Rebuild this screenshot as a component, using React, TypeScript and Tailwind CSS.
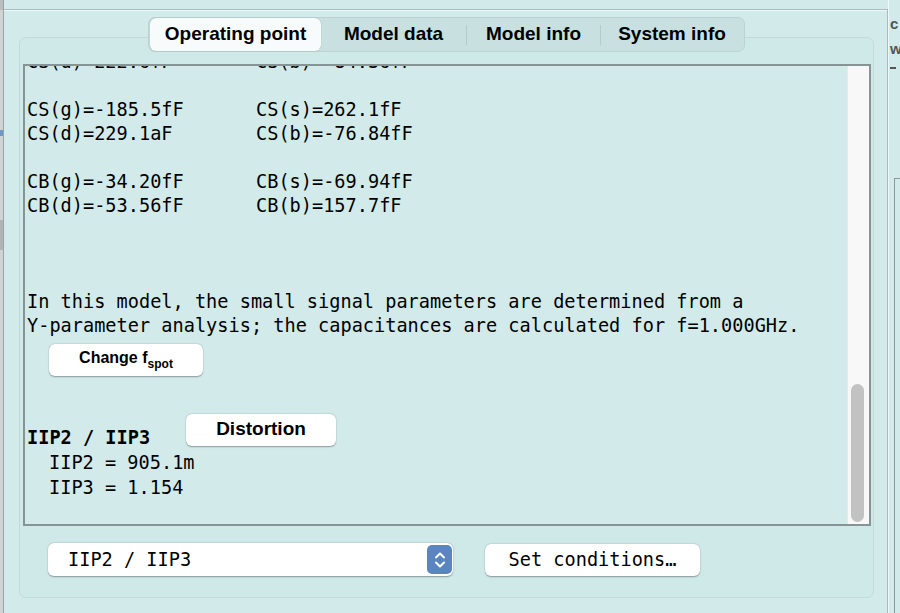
import React from "react";

const mono = { fontFamily: '"DejaVu Sans Mono", "Liberation Mono", monospace' };

function Line({ a, b }: { a: string; b?: string }) {
  return (
    <div className="flex h-[24px] items-center whitespace-pre">
      <span className="w-[229px]">{a}</span>
      {b ? <span>{b}</span> : null}
    </div>
  );
}

export default function App() {
  const tabs = [
    { label: "Operating point", w: "w-[171px]", active: true },
    { label: "Model data", w: "w-[145px]" },
    { label: "Model info", w: "w-[133px]" },
    { label: "System info", w: "w-[142px]" },
  ];
  return (
    <div
      className="relative flex h-[613px] w-[900px] overflow-hidden bg-[#d2eaea] text-black"
      style={{ fontFamily: '"Liberation Sans", Arial, sans-serif' }}
    >
      {/* left strip of another window */}
      <div className="flex w-[4px] flex-col border-r border-[#9aa6a6] bg-[#cfd3d3]">
        <div className="h-[10px] bg-[#b9bdbd]" />
        <div className="mt-[120px] h-[6px] bg-[#6f96c9]" />
        <div className="mt-[84px] h-[30px] bg-[#b0b4b4]" />
      </div>

      {/* main group box */}
      <div className="mt-[9px] flex h-[620px] w-[884px] flex-col items-start border-t border-r border-[#a8bcbc] pl-[15px] shadow-[inset_0_1px_0_#eef8f8]">
        <div className="flex w-[855px] flex-col items-center">
          {/* segmented tabs */}
          <div className="relative z-10 mt-[7px] flex h-[35px] items-center rounded-[7px] border border-[#bdd3d3] bg-[#c8e0e0] px-px text-[19px] font-bold">
            {tabs.map((t, i) => (
              <React.Fragment key={t.label}>
                {i >= 2 ? <div className="h-[20px] w-px bg-[#b3cbcb]" /> : null}
                <div
                  className={
                    "flex h-[33px] items-center justify-center " +
                    t.w +
                    (t.active
                      ? " rounded-[6px] bg-[#f7fbfb] shadow-[0_0_1px_rgba(0,0,0,0.35)]"
                      : "")
                  }
                >
                  {t.label}
                </div>
              </React.Fragment>
            ))}
          </div>

          {/* tab panel */}
          <div className="-mt-[15px] flex h-[561px] w-[855px] flex-col rounded-[7px] border border-[#c2dada] bg-[#cfe8e8] px-[3px] pt-[26px]">
            {/* text area */}
            <div className="flex h-[462px] w-[848px] overflow-hidden border-2 border-[#869494] bg-[#d2eaea]">
              <div className="flex-1 overflow-hidden pl-[2px] text-[18.6px]" style={mono}>
                <div className="-mt-[16px]">
                  <Line a="CS(d)=222.6fF" b="CS(b)=-84.36fF" />
                  <div className="h-[24px]" />
                  <Line a="CS(g)=-185.5fF" b="CS(s)=262.1fF" />
                  <Line a="CS(d)=229.1aF" b="CS(b)=-76.84fF" />
                  <div className="h-[24px]" />
                  <Line a="CB(g)=-34.20fF" b="CB(s)=-69.94fF" />
                  <Line a="CB(d)=-53.56fF" b="CB(b)=157.7fF" />
                  <div className="h-[72px]" />
                  <div className="h-[24px] leading-[24px] whitespace-pre">
                    In this model, the small signal parameters are determined from a
                  </div>
                  <div className="h-[24px] leading-[24px] whitespace-pre">
                    Y-parameter analysis; the capacitances are calculated for f=1.000GHz.
                  </div>
                  <div
                    className="ml-[22px] mt-[6px] flex h-[32px] w-[154px] items-start justify-center rounded-[6px] bg-white pt-[2px] text-[16px] font-bold shadow-[0_0.5px_1.5px_rgba(0,0,0,0.35)]"
                    style={{ fontFamily: '"Liberation Sans", Arial, sans-serif' }}
                  >
                    <span>Change f</span>
                    <span className="mt-[9px] text-[12px]">spot</span>
                  </div>
                  <div className="mt-[38px] flex items-start">
                    <div className="mt-[12px] h-[24px] w-[159px] font-bold leading-[24px]">IIP2 / IIP3</div>
                    <div
                      className="flex h-[32px] w-[150px] items-start justify-center rounded-[6px] bg-white pt-[1px] text-[19px] font-bold shadow-[0_0.5px_1.5px_rgba(0,0,0,0.35)]"
                      style={{ fontFamily: '"Liberation Sans", Arial, sans-serif' }}
                    >
                      Distortion
                    </div>
                  </div>
                  <div className="pl-[22px] leading-[25px] whitespace-pre">
                    <div>IIP2 = 905.1m</div>
                    <div>IIP3 = 1.154</div>
                  </div>
                </div>
              </div>
              {/* scrollbar */}
              <div className="flex h-full w-[22px] flex-col justify-end border-l border-[#e6eaea] bg-[#f8f8f8] pb-[2px] pl-[3px]">
                <div className="h-[138px] w-[13px] rounded-full bg-[#c2c2c2]" />
              </div>
            </div>

            {/* bottom controls */}
            <div className="mt-[17px] flex items-center pl-[25px]">
              <div className="flex h-[33px] w-[405px] items-center justify-between rounded-[6px] bg-white pl-[20px] pr-[1px] text-[18.6px] shadow-[0_0.5px_1.5px_rgba(0,0,0,0.35)]" style={mono}>
                <span>IIP2 / IIP3</span>
                <div className="flex h-[29px] w-[25px] items-center justify-center rounded-[5px] bg-[#5b85c0]">
                  <svg width="12" height="20" viewBox="0 0 12 20" fill="none" stroke="white" strokeWidth="2" strokeLinecap="round" strokeLinejoin="round">
                    <path d="M2 7.5 L6 3.5 L10 7.5" />
                    <path d="M2 12.5 L6 16.5 L10 12.5" />
                  </svg>
                </div>
              </div>
              <div className="ml-[32px] flex h-[32px] w-[215px] items-center justify-center rounded-[6px] bg-white text-[18.6px] shadow-[0_0.5px_1.5px_rgba(0,0,0,0.35)]" style={mono}>
                Set conditions…
              </div>
            </div>
          </div>
        </div>
      </div>

      {/* right edge of neighbouring panel */}
      <div className="relative flex-1 border-l border-[#eef8f8]">
        <div className="absolute left-[1px] top-[14px] text-[15px] font-bold leading-[20px] text-[#555]">c</div>
        <div className="absolute left-[1px] top-[39px] text-[15px] font-bold leading-[20px] text-[#555]">w</div>
        <div className="absolute left-[1px] top-[67px] h-[2px] w-[6px] bg-[#555]" />
        <div className="absolute left-[5px] top-[178px] h-[440px] w-[8px] border-l border-t border-[#8c9a9a]" />
      </div>
    </div>
  );
}
